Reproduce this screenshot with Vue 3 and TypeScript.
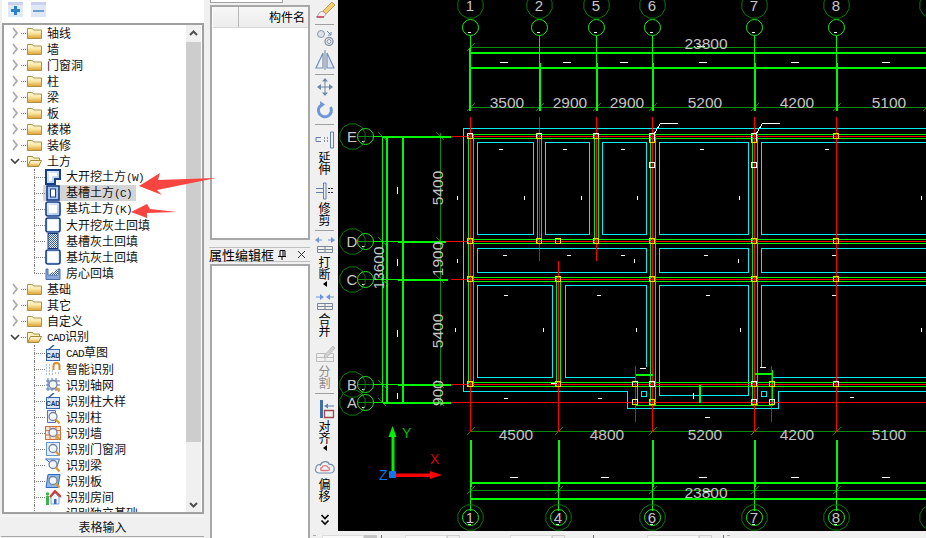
<script setup lang="ts">
type Seg = [number, number, number, number];

interface TreeRow {
  label: string;
  level: 0 | 1;
  kind: string;
  prefix?: string;
  suffix?: string;
  open?: boolean;
  last?: boolean;
  selected?: boolean;
}

interface Tool {
  icon: string;
  gap: number;
  label?: string[];
  menu?: boolean;
  muted?: boolean;
}

const folder = (label: string): TreeRow => ({ label, level: 0, kind: "folder" });
const leaf = (label: string, kind: string, suffix = ""): TreeRow => ({ label, suffix, level: 1, kind });

const treeRows: TreeRow[] = [
  folder("轴线"),
  folder("墙"),
  folder("门窗洞"),
  folder("柱"),
  folder("梁"),
  folder("板"),
  folder("楼梯"),
  folder("装修"),
  { label: "土方", level: 0, kind: "folder", open: true },
  leaf("大开挖土方", "dig", "(W)"),
  { ...leaf("基槽土方", "trench", "(C)"), selected: true },
  leaf("基坑土方", "pit", "(K)"),
  leaf("大开挖灰土回填", "fill"),
  leaf("基槽灰土回填", "fillNarrow"),
  leaf("基坑灰土回填", "fill"),
  { ...leaf("房心回填", "room"), last: true },
  folder("基础"),
  folder("其它"),
  folder("自定义"),
  { label: "识别", prefix: "CAD", level: 0, kind: "folder", open: true },
  { ...leaf("草图", "cad"), prefix: "CAD" },
  leaf("智能识别", "magnet"),
  leaf("识别轴网", "gridFind"),
  leaf("识别柱大样", "cad"),
  leaf("识别柱", "colFind"),
  leaf("识别墙", "wallFind"),
  leaf("识别门窗洞", "doorFind"),
  leaf("识别梁", "beamFind"),
  leaf("识别板", "slabFind"),
  leaf("识别房间", "house"),
  leaf("识别独立基础", "base"),
];

const tools: Tool[] = [
  { icon: "brush", gap: 0 },
  { icon: "sep", gap: 4 },
  { icon: "circles", gap: 3 },
  { icon: "mirror", gap: 2 },
  { icon: "sep", gap: 4 },
  { icon: "move", gap: 2 },
  { icon: "rotate", gap: 3 },
  { icon: "sep", gap: 4 },
  { icon: "extend", gap: 5, label: ["延", "伸"] },
  { icon: "trim", gap: 6, label: ["修", "剪"] },
  { icon: "sep", gap: 4 },
  { icon: "break", gap: 4, label: ["打", "断"], menu: true },
  { icon: "merge", gap: 5, label: ["合", "并"] },
  { icon: "split", gap: 7, label: ["分", "割"], muted: true },
  { icon: "sep", gap: 4 },
  { icon: "align", gap: 5, label: ["对", "齐"], menu: true },
  { icon: "cloud", gap: 6, label: ["偏", "移"] },
];

// 图纸坐标直接用页面坐标，viewBox 从 338 开始
const R = 926;
const yE = 136;
const yD = 241;
const yC = 279;
const yB = 384;
const yA = 402;
const topAxes = [470, 539, 596, 652, 754, 836];
const botAxes = [470, 558, 652, 754, 836];

const toPath = (segs: Seg[]) => segs.map((s) => `M${s[0]},${s[1]}L${s[2]},${s[3]}`).join("");

const ngon = (cx: number, cy: number, r: number, n = 12) =>
  Array.from({ length: n }, (_, i) => {
    const a = (Math.PI * 2 * i) / n + Math.PI / n;
    return `${(cx + r * Math.cos(a)).toFixed(1)},${(cy + r * Math.sin(a)).toFixed(1)}`;
  }).join(" ");

const redPath = toPath([
  [450, yE, R, yE],
  [445, yD, R, yD],
  [450, yC, R, yC],
  [450, yB, R, yB],
  [450, yA, R, yA],
  [470, 116, 470, 431],
  [539, 116, 539, 260],
  [596, 116, 596, 260],
  [558, 260, 558, 431],
  [652, 116, 652, 431],
  [754, 116, 754, 431],
  [836, 116, 836, 431],
  [635, 365, 635, 421],
  [771, 365, 771, 421],
]);

const greenPath = toPath([
  ...topAxes.map((x): Seg => [x, 35, x, 62]),
  ...botAxes.map((x): Seg => [x, 486, x, 510]),
  [926, 486, 926, 510],
  [468, 134, R, 134],
  [468, 138, R, 138],
  [468, 239, R, 239],
  [468, 243, R, 243],
  [468, 277, R, 277],
  [468, 281, R, 281],
  [468, 382, R, 382],
  [468, 386, R, 386],
  [635, 405, 772, 405],
  [468, 134, 468, 386],
  [473, 134, 473, 386],
  [537, 134, 537, 243],
  [541, 134, 541, 243],
  [594, 134, 594, 243],
  [598, 134, 598, 243],
  [556, 277, 556, 386],
  [560, 277, 560, 386],
  [650, 134, 650, 405],
  [655, 134, 655, 405],
  [752, 134, 752, 405],
  [757, 134, 757, 405],
  [635, 369, 635, 405],
  [637, 384, 637, 405],
  [772, 369, 772, 405],
  [382, yE, 382, yA],
  [373, yE, 382, yE],
  [373, yD, 397, yD],
  [373, yC, 397, yC],
  [373, yB, 397, yB],
  [373, yA, 382, yA],
  [689, yB, 703, yB],
  [689, yA, 703, yA],
]);

const thickPath = toPath([
  [470, 52, R, 52],
  [470, 67, R, 67],
  [470, 482, R, 482],
  [470, 498, R, 498],
  [469, 47, 469, 110],
  ...topAxes.slice(1).map((x): Seg => [x, 62, x, 110]),
  ...botAxes.map((x): Seg => [x, 439, x, 486]),
  [386, yE, 386, yA],
  [402, yE, 402, yA],
  [382, yE, 450, yE],
  [397, yD, 445, yD],
  [397, yC, 447, yC],
  [397, yB, 450, yB],
  [382, yA, 450, yA],
  [635, 374, 652, 374],
  [754, 373, 772, 373],
  [699, yB, 699, yA],
]);

const dimTicks: Seg[] = [];
[...topAxes, 926].forEach((x) => {
  dimTicks.push([x - 4, 111, x + 4, 103]);
});
dimTicks.push([466, 51, 474, 43]);
botAxes.forEach((x) => {
  dimTicks.push([x - 4, 435, x + 4, 427]);
  dimTicks.push([x - 4, 494, x + 4, 486]);
});
[yE, yD, yC, yB, yA].forEach((y) => {
  dimTicks.push([436, y - 4, 444, y + 4]);
  dimTicks.push([378, y - 4, 386, y + 4]);
});

const darkPath = toPath([
  [470, 47, R, 47],
  [470, 107, R, 107],
  [470, 431, R, 431],
  [470, 490, R, 490],
  [440, 132, 440, 405],
  [357, yE, 373, yE],
  [357, yD, 373, yD],
  [357, yC, 373, yC],
  [357, yB, 373, yB],
  [357, yA, 373, yA],
  ...dimTicks,
]);

const cyanPath = [
  `M${R},128H463V391H627V408H778V391H${R}`,
  "M477,142H533V234H477Z",
  "M545,142H589V234H545Z",
  "M602,142H646V234H602Z",
  "M659,142H748V234H659Z",
  `M${R},142H761V234H${R}`,
  "M477,248H646V272H477Z",
  "M659,248H748V272H659Z",
  `M${R},248H761V272H${R}`,
  "M477,285H552V377H477Z",
  "M635,377H565V285H646V366",
  "M659,285H748V395H659Z",
  `M${R},285H761V366M772,377H${R}`,
  "M641,391H646V396H641Z",
  "M761,391H766V396H761Z",
].join("");

const whitePath = toPath([
  ...[503, 566, 623, 702, 794, 885].map((x): Seg => [x - 4, 62, x + 4, 62]),
  ...[513, 604, 702, 794, 885].map((x): Seg => [x - 4, 477, x + 4, 477]),
  ...[500, 564, 622, 701, 826].map((x): Seg => [x - 2, 149, x + 2, 149]),
  ...[504, 568, 622, 705, 833].map((x): Seg => [x - 2, 255, x + 2, 255]),
  ...[505, 598, 707, 833].map((x): Seg => [x - 2, 295, x + 2, 295]),
  ...[505, 599].map((x): Seg => [x - 2, 398, x + 2, 398]),
  [704, 417, 709, 417],
  [849, 397, 853, 397],
  [639, 368, 645, 368],
  [759, 367, 765, 367],
  [550, 383, 556, 383],
  [696, 46, 704, 46],
  [702, 491, 710, 491],
  ...[457, 524, 581, 637, 739, 921].map((x): Seg => [x, 195, x, 199]),
  [397, 186, 397, 193],
  [397, 258, 397, 265],
  [457, 258, 457, 262],
  [634, 258, 634, 262],
  [738, 258, 738, 262],
  [397, 329, 397, 336],
  ...[455, 543, 636, 740, 921].map((x): Seg => [x, 327, x, 331]),
  [397, 392, 397, 398],
  [693, 392, 693, 398],
  [654, 133, 660, 123],
  [660, 123, 677, 123],
  [756, 133, 762, 123],
  [762, 123, 779, 123],
  ...topAxes.map((x): Seg => [x - 3, 32, x, 32]),
  ...botAxes.map((x): Seg => [x - 3, 524, x, 524]),
  ...[yE, yD, yC, yB, yA].map((y): Seg => [361, y + 5, 364, y + 5]),
]);

const marks: { x: number; y: number; h?: number; c: string }[] = [
  { x: 470, y: yE, c: "both" },
  { x: 539, y: yE, c: "both" },
  { x: 596, y: yE, c: "both" },
  { x: 652, y: 136, h: 9, c: "both" },
  { x: 754, y: 136, h: 9, c: "both" },
  { x: 836, y: yE, c: "y" },
  { x: 652, y: 165, c: "w" },
  { x: 754, y: 165, c: "w" },
  ...[470, 539, 558, 596, 652, 754, 836].map((x) => ({ x, y: yD, c: "y" })),
  ...[470, 558, 652, 754, 836].map((x) => ({ x, y: yC, c: "y" })),
  { x: 470, y: yB, c: "y" },
  { x: 558, y: yB, c: "y" },
  { x: 635, y: yB, c: "both" },
  { x: 652, y: yB, c: "w" },
  { x: 754, y: yB, c: "both" },
  { x: 772, y: yB, c: "y" },
  { x: 836, y: yB, c: "both" },
  { x: 635, y: yA, c: "both" },
  { x: 652, y: yA, c: "y" },
  { x: 754, y: yA, c: "both" },
  { x: 772, y: yA, c: "both" },
];

const outerBubbles = [
  ...topAxes.map((x, i) => ({ x, y: 5, t: ["1", "2", "5", "6", "7", "8"][i] })),
  { x: 932, y: 5, t: "" },
  ...botAxes.map((x, i) => ({ x, y: 517, t: ["1", "4", "6", "7", "8"][i] })),
  { x: 932, y: 517, t: "" },
  { x: 352, y: yE, t: "E" },
  { x: 352, y: yD, t: "D" },
  { x: 352, y: yC, t: "C" },
  { x: 352, y: yB, t: "B" },
  { x: 352, y: yA, t: "A" },
];

const innerBubbles = [
  ...topAxes.map((x) => ({ x, y: 27 })),
  ...botAxes.map((x) => ({ x, y: 517 })),
  ...[yE, yD, yC, yB, yA].map((y) => ({ x: 365, y })),
];

const dims = [
  { t: "23800", x: 706, y: 43 },
  { t: "3500", x: 507, y: 102 },
  { t: "2900", x: 570, y: 102 },
  { t: "2900", x: 627, y: 102 },
  { t: "5200", x: 705, y: 102 },
  { t: "4200", x: 797, y: 102 },
  { t: "5100", x: 889, y: 102 },
  { t: "4500", x: 516, y: 434 },
  { t: "4800", x: 607, y: 434 },
  { t: "5200", x: 705, y: 434 },
  { t: "4200", x: 797, y: 434 },
  { t: "5100", x: 889, y: 434 },
  { t: "23800", x: 706, y: 492 },
];

const sideDims = [
  { t: "5400", x: 437, y: 188 },
  { t: "1900", x: 437, y: 259 },
  { t: "5400", x: 437, y: 331 },
  { t: "900", x: 437, y: 393 },
  { t: "13600", x: 378, y: 268 },
];
</script>

<template>
  <div class="app">
    <!-- 公共渐变 -->
    <svg class="defs" width="0" height="0" aria-hidden="true">
      <defs>
        <linearGradient id="fold" x1="0" y1="0" x2="0" y2="1">
          <stop offset="0" stop-color="#fffbe8" />
          <stop offset="0.45" stop-color="#fbe7a8" />
          <stop offset="1" stop-color="#dfa02c" />
        </linearGradient>
        <linearGradient id="glow" x1="0" y1="0" x2="1" y2="1">
          <stop offset="0" stop-color="#e8f0fd" />
          <stop offset="1" stop-color="#a9c4ee" />
        </linearGradient>
        <pattern id="check" width="2" height="2" patternUnits="userSpaceOnUse">
          <rect width="2" height="2" fill="#e6eefb" />
          <rect width="1" height="1" fill="#3a5c94" />
          <rect x="1" y="1" width="1" height="1" fill="#3a5c94" />
        </pattern>
      </defs>
    </svg>

    <section class="left">
      <div class="left-top">
        <button type="button" class="mini"><span class="plus"></span></button>
        <button type="button" class="mini"><span class="minus"></span></button>
      </div>

      <div class="tree-box">
        <div class="tree">
          <div v-for="(row, i) in treeRows" :key="i" class="row">
            <template v-if="row.level === 0">
              <svg class="chev" width="12" height="16" viewBox="0 0 12 16">
                <path v-if="row.open" d="M2 6l4 4 4-4" fill="none" stroke="#404040" stroke-width="1.6" />
                <path v-else d="M4 3l4 5-4 5" fill="none" stroke="#a6a6a6" stroke-width="1.6" />
              </svg>
              <span class="dots"></span>
              <svg class="ico-folder" width="17" height="16" viewBox="0 0 17 16">
                <template v-if="row.open">
                  <path d="M1.5 13.5V3.5h5l1 1.5h6v2" fill="#fff3c4" stroke="#a98a3c" />
                  <path d="M1.5 13.5l3-6h11l-3 6z" fill="url(#fold)" stroke="#a98a3c" />
                </template>
                <path v-else d="M1.5 13.5V3.5h5l1 1.5h8v8.5z" fill="url(#fold)" stroke="#b09245" />
              </svg>
              <span class="label"><span v-if="row.prefix" class="latin">{{ row.prefix }}</span>{{ row.label }}</span>
            </template>

            <template v-else>
              <span class="guide" :class="{ last: row.last }"></span>
              <span class="leaf" :class="{ selected: row.selected }">
                <svg class="ico" width="16" height="16" viewBox="0 0 16 16">
                  <template v-if="row.kind === 'dig'">
                    <path d="M1 1h14v9h-5v5H1z" fill="url(#glow)" stroke="#143f88" stroke-width="2" />
                    <path d="M4 4h8v3H7v5H4z" fill="#fff" />
                  </template>
                  <template v-else-if="row.kind === 'trench'">
                    <rect x="2" y="1" width="12" height="14" fill="#a9c4ee" stroke="#143f88" stroke-width="1.6" />
                    <rect x="5.5" y="4" width="5" height="8" fill="#fff" stroke="#143f88" />
                  </template>
                  <template v-else-if="row.kind === 'pit'">
                    <rect x="1" y="1" width="14" height="14" rx="2" fill="url(#glow)" stroke="#143f88" stroke-width="1.6" />
                    <rect x="4" y="4" width="8" height="8" fill="#fff" />
                  </template>
                  <template v-else-if="row.kind === 'fill'">
                    <rect x="1" y="1" width="14" height="14" rx="2" fill="#dfe9fa" stroke="#143f88" stroke-width="1.6" />
                    <rect x="3" y="3" width="10" height="10" fill="#fff" />
                  </template>
                  <template v-else-if="row.kind === 'fillNarrow'">
                    <rect x="3" y="0.5" width="10" height="15" fill="url(#check)" stroke="#143f88" />
                  </template>
                  <template v-else-if="row.kind === 'room'">
                    <path d="M1 4v10.5h14V4h-2v6H3V4z" fill="#8ba7d8" stroke="#4a6ca8" />
                    <path d="M4 10l3-3 2 1 2-4 2 1v5z" fill="url(#check)" />
                  </template>
                  <template v-else-if="row.kind === 'cad'">
                    <rect x="1.5" y="4.5" width="13" height="11" fill="#dbe7f8" stroke="#3a68ae" />
                    <text x="8" y="13" class="tiny">CAD</text>
                    <path d="M3 5l6-5" stroke="#2f5ea8" stroke-width="1.5" />
                  </template>
                  <template v-else-if="row.kind === 'magnet'">
                    <path d="M1 4h1M4 4h1M1 7h1M4 7h1M7 10h1M1 10h1M4 10h1M10 12h1M13 12h1M1 13h1M4 13h1M7 13h1" stroke="#4a86d8" />
                    <path d="M8.5 9V5a3 3 0 0 1 6 0v4" fill="none" stroke="#e08a2c" stroke-width="2" />
                  </template>
                  <template v-else-if="row.kind === 'house'">
                    <rect x="1" y="7" width="3" height="9" fill="#3fb34a" />
                    <circle cx="2.5" cy="5" r="1.8" fill="#3fb34a" />
                    <path d="M6 8v7h8V8l-4-4z" fill="#f4f8ff" stroke="#7aa0d8" />
                    <path d="M5 8l5-6 6 6" fill="none" stroke="#d8342c" stroke-width="2" />
                    <rect x="9" y="10" width="2.5" height="5" fill="#3a68ae" />
                  </template>
                  <template v-else-if="row.kind === 'base'">
                    <path d="M2 10l3-3 2 1v6H2zM9 8h5v6H9z" fill="#7e9cc8" stroke="#3a5c94" />
                  </template>
                  <template v-else>
                    <path v-if="row.kind === 'gridFind'" d="M3 1v13M7 1v13M11 1v13M1 4h14M1 8h14M1 12h14" stroke="#4a72b8" fill="none" />
                    <path v-if="row.kind === 'colFind'" d="M2.5 1.5h8v12h-8z" fill="#e8eefb" stroke="#5a70b0" />
                    <g v-if="row.kind === 'wallFind'">
                      <rect x="0.5" y="1.5" width="15" height="13" fill="#fbe4d4" stroke="#d0703a" />
                      <path d="M1 5.5h14M1 10h14M5 1.5v13M11 1.5v13" stroke="#d0703a" />
                    </g>
                    <g v-if="row.kind === 'doorFind'">
                      <rect x="1.5" y="1.5" width="13" height="13" fill="#e4eefc" stroke="#5f92d8" />
                    </g>
                    <path v-if="row.kind === 'beamFind'" d="M0.5 2h14l-3 9z" fill="#dce8fa" stroke="#2f6cc0" />
                    <path v-if="row.kind === 'slabFind'" d="M3 1.5h12l-2 13H1z" fill="#8fb6ea" stroke="#2f6cc0" />
                    <circle cx="8" cy="7.5" r="4" fill="#f2f6fd" stroke="#77839a" stroke-width="1.3" />
                    <path d="M11 10.5l3.5 4" stroke="#dc9a30" stroke-width="2.2" />
                  </template>
                </svg>
                <span class="label"><span v-if="row.prefix" class="latin">{{ row.prefix }}</span>{{ row.label }}<span v-if="row.suffix" class="latin">{{ row.suffix }}</span></span>
              </span>
            </template>
          </div>
        </div>

        <div class="scrollbar">
          <div class="scroll-btn">
            <svg width="15" height="17" viewBox="0 0 15 17"><path d="M4 10l3.5-3.5L11 10" fill="none" stroke="#505050" stroke-width="2" /></svg>
          </div>
          <div class="thumb"></div>
          <div class="track"></div>
          <div class="scroll-btn">
            <svg width="15" height="17" viewBox="0 0 15 17"><path d="M4 8l3.5 3.5L11 8" fill="none" stroke="#505050" stroke-width="2" /></svg>
          </div>
        </div>
      </div>

      <button type="button" class="table-input">表格输入</button>

      <!-- 截图上的红色标注箭头 -->
      <svg class="callouts" width="220" height="60" viewBox="0 0 220 60">
        <path d="M139 16L160 3L158 10L216 8L157 20L162 25z" fill="#f8453f" />
        <path d="M131 42L147 34L150 39L177 42L147 43L147 48z" fill="#f8453f" />
      </svg>
    </section>

    <section class="middle">
      <div class="mid-stub"><div class="mid-stub-tab"></div></div>
      <div class="grid-box">
        <div class="grid-head">
          <div class="grid-cell-a"></div>
          <div class="grid-cell-b">构件名</div>
        </div>
      </div>
      <div class="prop-title">
        <span class="prop-text">属性编辑框</span>
        <svg width="10" height="12" viewBox="0 0 10 12"><path d="M3 1.5h5v6H3zM6 1.5v6M1 7.5h8M5 7.5V11" fill="none" stroke="#000" /></svg>
        <svg class="prop-close" width="9" height="9" viewBox="0 0 9 9"><path d="M1 1l7 7M8 1L1 8" stroke="#333" /></svg>
      </div>
      <div class="prop-box"></div>
    </section>

    <section class="right">
      <div class="work">
        <aside class="toolbar">
          <div v-for="(tool, i) in tools" :key="i" class="tool" :class="{ muted: tool.muted }" :style="{ marginTop: tool.gap + 'px' }">
            <div v-if="tool.icon === 'sep'" class="tool-sep"></div>
            <svg v-else width="22" height="20" viewBox="0 0 22 20">
              <g v-if="tool.icon === 'brush'">
                <path d="M9 11L18 2l3 3-9 9z" fill="#f2cf70" stroke="#b48c3c" stroke-width="0.8" />
                <path d="M5 13c2-2 4-2 6 0s-1 4-3 4H2c2-1 2-2 3-4z" fill="#f4eef0" stroke="#9a8ea0" stroke-width="0.8" />
                <path d="M3 17h7" stroke="#d03a5a" stroke-width="1.5" />
              </g>
              <g v-else-if="tool.icon === 'circles'" fill="none" stroke="#8a96a6">
                <circle cx="7" cy="6" r="3.5" fill="#dde2ea" />
                <circle cx="15" cy="13.5" r="4" stroke-width="1.4" />
                <circle cx="15" cy="13.5" r="2" />
                <path d="M13 3l4 4M17 4v3h-3" stroke="#6d8ab8" />
              </g>
              <g v-else-if="tool.icon === 'mirror'" fill="none" stroke="#7590b8" stroke-width="1.2">
                <path d="M9 3v15H2z" />
                <path d="M13 3v15h7z" fill="#dfe8f5" />
                <path d="M11 0v20" stroke="#8a96a6" />
              </g>
              <g v-else-if="tool.icon === 'move'" fill="#6f87a8">
                <path d="M4 9.5h14v1H4zM10.5 3h1v14h-1z" />
                <path d="M11 1l3 3.500H8zM11 19l3-3.500H8zM3 10l4-3v6zM19 10l-4-3v6z" />
              </g>
              <g v-else-if="tool.icon === 'rotate'">
                <path d="M8 4.5A6.500 6.500 0 1 0 16.500 7" fill="none" stroke="#6f96dc" stroke-width="3" />
                <path d="M6 1l5 3.5L6.5 8z" fill="#6f96dc" />
              </g>
              <g v-else-if="tool.icon === 'extend'" fill="none" stroke="#5f7fb4">
                <path d="M7 7.500H2v4h5" />
                <path d="M10 8h1M10 11h1M13 8h1M13 11h1" stroke="#333" />
                <path d="M16.500 2h3v16h-3z" />
              </g>
              <g v-else-if="tool.icon === 'trim'" fill="none" stroke="#5f7fb4">
                <path d="M2 7.500h8M2 11.500h8" />
                <path d="M9.500 2H12v16H9.500z" />
                <path d="M14 7.500h6M14 11.500h6" stroke="#333" stroke-dasharray="2 1" />
              </g>
              <g v-else-if="tool.icon === 'break'">
                <path d="M2 5h6M14 5h6" stroke="#6f96dc" />
                <path d="M1 5l4-3v6zM21 5l-4-3v6z" fill="#6f96dc" />
                <path d="M3.500 11.500h15v6h-15zM11 11.500v6M3.500 14.500h15" fill="none" stroke="#7a8798" />
              </g>
              <g v-else-if="tool.icon === 'merge'">
                <path d="M2 5h6M14 5h6" stroke="#6f96dc" />
                <path d="M10 5L6 2v6zM12 5l4-3v6z" fill="#6f96dc" />
                <path d="M3.500 11.500h15v6h-15zM11 11.500v6M3.500 14.500h15" fill="none" stroke="#7a8798" />
              </g>
              <g v-else-if="tool.icon === 'split'" fill="none" stroke="#bdbdbd">
                <path d="M2.500 9.500h17v8h-17zM2.500 13.500h17M11 9.500v8" />
                <path d="M10 12l9-10 2 2-9 10z" fill="#d2d2d2" />
              </g>
              <g v-else-if="tool.icon === 'align'">
                <rect x="6" y="1" width="3" height="18" fill="#3e6ea8" />
                <path d="M10.500 11.500h9v7h-9z" fill="none" stroke="#a04a50" stroke-width="1.3" />
                <path d="M12 7h8" stroke="#5f7fb4" />
                <path d="M10 7l4-2.500v5z" fill="#5f7fb4" />
              </g>
              <g v-else-if="tool.icon === 'cloud'" fill="none">
                <path d="M5 16c-3 0-4.500-3-3-5 0-3 3-4 4.500-3C7.500 4 14 3 15.500 7.500c3-.5 5 2 4.500 4 1 2-1 4.500-3.500 4.500z" stroke="#6f8ca8" stroke-width="1.2" fill="#f3f5f8" />
                <path d="M8 13.500c-2 0-2-2.500 0-3 .5-2.500 5-2.500 6 0 2 0 2 3 0 3z" stroke="#e07a78" stroke-width="1.3" />
              </g>
            </svg>
            <div v-if="tool.label" class="tool-label">
              <span v-for="ch in tool.label" :key="ch">{{ ch }}</span>
            </div>
            <svg v-if="tool.menu" class="tool-menu" width="6" height="6" viewBox="0 0 6 6"><path d="M5 0v6L1 3z" fill="#000" /></svg>
          </div>
          <svg class="tool-more" width="10" height="12" viewBox="0 0 10 12">
            <path d="M1.5 1L5 4.500 8.500 1M1.500 6.500L5 10l3.500-3.500" fill="none" stroke="#000" stroke-width="1.6" />
          </svg>
        </aside>

        <div class="canvas">
          <svg class="drawing" viewBox="338 0 588 531" width="588" height="531">
            <g transform="translate(0.5 0.5)" fill="none">
              <g shape-rendering="crispEdges">
                <path :d="darkPath" stroke="#0a8a0a" />
                <path :d="cyanPath" stroke="#00f0f8" />
                <path :d="greenPath" stroke="#00f000" />
                <path :d="redPath" stroke="#ff0000" />
                <path :d="thickPath" stroke="#00f800" stroke-width="2" />
                <path :d="whitePath" stroke="#ffffff" />
                <template v-for="(m, i) in marks" :key="i">
                  <rect :x="m.x - 3" :y="m.y - 3" width="5" :height="m.h ?? 5" :stroke="m.c === 'w' ? '#ffffff' : '#f0e000'" />
                  <path v-if="m.c === 'both'" :d="`M${m.x - 3},${m.y - 3}h5v${(m.h ?? 5) - 2}M${m.x - 3},${m.y - 3}v${(m.h ?? 5) - 2}`" stroke="#ffffff" />
                </template>
              </g>
              <polygon v-for="(b, i) in outerBubbles" :key="'o' + i" :points="ngon(b.x, b.y, 13)" stroke="#0a7a0a" />
              <circle v-for="(b, i) in innerBubbles" :key="'c' + i" :cx="b.x" :cy="b.y" r="8" stroke="#22e822" />
            </g>

            <text v-for="(b, i) in outerBubbles" :key="'t' + i" :x="b.x" :y="b.y + 6" class="bubble-text">{{ b.t }}</text>
            <text v-for="(d, i) in dims" :key="'d' + i" :x="d.x" :y="d.y + 6" class="dim-text">{{ d.t }}</text>
            <text
              v-for="(d, i) in sideDims"
              :key="'s' + i"
              class="dim-text"
              :transform="`translate(${d.x + 6} ${d.y}) rotate(-90)`"
            >{{ d.t }}</text>

            <!-- UCS 坐标系图标 -->
            <path d="M391.5 474V436h3v38z" fill="#00f000" />
            <path d="M388.5 437l4-11 4 11z" fill="#00f000" />
            <path d="M393 473.5h38v3.500h-38z" fill="#ff0000" />
            <path d="M430 471l12 4-12 4z" fill="#ff0000" />
            <rect x="389" y="471" width="7" height="7" rx="1" fill="#0a78f0" />
            <text x="402" y="438" class="ucs ucs-y">Y</text>
            <text x="430" y="464" class="ucs ucs-x">X</text>
            <text x="379" y="480" class="ucs ucs-z">Z</text>
          </svg>
        </div>
      </div>

      <footer class="status">
        <span class="grip"></span>
        <span class="field f1"></span>
        <span class="field-thumb"></span>
        <span class="status-sep s1"></span>
        <span class="field f2"></span>
        <span class="field-btn"></span>
        <span class="field f3"></span>
        <span class="field-btn"></span>
        <span class="status-sep s2"></span>
        <span class="field f4"></span>
        <span class="field-btn"></span>
        <span class="status-sep s3"></span>
        <span class="grip"></span>
      </footer>
    </section>
  </div>
</template>

<style>
html,
body {
  margin: 0;
  background: #f0f0f0;
}
</style>

<style scoped>
.app {
  position: relative;
  display: flex;
  width: 926px;
  height: 538px;
  overflow: hidden;
  background: #f0f0f0;
  font-family: "Noto Sans CJK SC", "Liberation Sans", sans-serif;
  font-size: 12px;
  color: #000;
}

.defs {
  position: absolute;
}

.left {
  position: relative;
  display: flex;
  flex-direction: column;
  flex: none;
  width: 204px;
  margin-right: 4px;
}

.left-top {
  display: flex;
  gap: 8px;
  height: 23px;
  margin-left: 2px;
  padding: 2px 0 0 6px;
  box-sizing: border-box;
  background: #fff;
}

.mini {
  display: flex;
  align-items: center;
  justify-content: center;
  width: 15px;
  height: 15px;
  padding: 2px 0 0;
  border: 0;
  background: linear-gradient(#c9d1ef 0 3px, #dfe8f6 3px);
}

.plus,
.minus {
  position: relative;
  display: block;
  width: 9px;
  height: 3px;
  background: #2c82c9;
}

.minus {
  background: #6b9fd0;
  width: 11px;
  height: 2px;
}

.plus::after {
  content: "";
  position: absolute;
  left: 3px;
  top: -3px;
  width: 3px;
  height: 9px;
  background: #2c82c9;
}

.tree-box {
  display: flex;
  height: 491px;
  margin-left: 2px;
  border: 2px solid #a0a0a0;
  box-sizing: border-box;
  background: #fff;
}

.tree {
  flex: 1;
  min-width: 0;
  overflow: hidden;
}

.row {
  display: flex;
  align-items: center;
  height: 16px;
  white-space: nowrap;
}

.chev {
  flex: none;
  margin-left: 5px;
}

.dots {
  flex: none;
  width: 5px;
  height: 0;
  border-top: 1px dotted #808080;
}

.ico-folder {
  flex: none;
  margin-right: 4px;
}

.label {
  font-size: 12px;
  line-height: 16px;
  color: #111;
}

.latin {
  font-family: "Liberation Mono", monospace;
  font-size: 11px;
  letter-spacing: -0.6px;
}

.guide {
  position: relative;
  flex: none;
  width: 11px;
  height: 16px;
  margin-left: 30px;
}

.guide::before {
  content: "";
  position: absolute;
  left: 0;
  top: 0;
  bottom: 0;
  border-left: 1px dotted #808080;
}

.guide.last::before {
  bottom: 8px;
}

.guide::after {
  content: "";
  position: absolute;
  left: 0;
  right: 0;
  top: 8px;
  border-top: 1px dotted #808080;
}

.leaf {
  display: flex;
  align-items: center;
  height: 16px;
  margin-left: -2px;
  padding: 0 4px 0 2px;
}

.leaf.selected {
  background: #d4d4d4;
}

.ico {
  flex: none;
  margin-right: 5px;
}

.tiny {
  font-family: "Liberation Sans", sans-serif;
  font-size: 6.5px;
  font-weight: 700;
  text-anchor: middle;
  fill: #1a2c50;
}

.scrollbar {
  display: flex;
  flex-direction: column;
  flex: none;
  width: 15px;
  margin-right: 1px;
  background: #f0f0f0;
}

.scroll-btn {
  flex: none;
  height: 17px;
}

.thumb {
  flex: none;
  height: 400px;
  background: #cdcdcd;
}

.track {
  flex: 1;
}

.table-input {
  flex: none;
  width: 203px;
  height: 21px;
  margin: 2px 0 0 1px;
  padding: 0;
  border: 0;
  border-top: 1px solid #f8f8f8;
  border-bottom: 1px solid #a8a8a8;
  background: #f0f0f0;
  font: inherit;
  font-size: 12px;
  color: #111;
}

.callouts {
  position: absolute;
  left: 0;
  top: 170px;
  overflow: visible;
}

.middle {
  display: flex;
  flex-direction: column;
  flex: none;
  width: 103px;
}

.mid-stub {
  height: 5px;
  margin: 0 4px 0 2px;
  box-sizing: border-box;
}

.mid-stub-tab {
  width: 73px;
  height: 3px;
  box-sizing: border-box;
  background: #fff;
  border: 1px solid #a0a0a0;
  border-top: 0;
}

.grid-box {
  height: 235px;
  margin: 0 1px 0 2px;
  border: 2px solid #a8a8a8;
  box-sizing: border-box;
  background: #fff;
}

.grid-head {
  display: flex;
  height: 21px;
  margin-left: 1px;
  border-bottom: 1px solid #d8d8d8;
  box-sizing: border-box;
  background: linear-gradient(#f7f7f7, #ececec);
  line-height: 20px;
}

.grid-cell-a {
  flex: none;
  width: 25px;
  border-right: 1px solid #b8b8b8;
}

.grid-cell-b {
  flex: 1;
  padding-right: 3px;
  overflow: hidden;
  text-align: right;
  white-space: nowrap;
}

.prop-title {
  display: flex;
  align-items: center;
  height: 15px;
  margin: 7px 1px 0 1px;
  border-top: 1px solid #c0c0c0;
  border-bottom: 1px solid #c0c0c0;
  box-sizing: border-box;
  background: #f0f0f0;
}

.prop-text {
  font-size: 13px;
  line-height: 13px;
  margin-right: 3px;
}

.prop-close {
  margin-left: 10px;
}

.prop-box {
  flex: 1;
  margin: 2px 1px 0 2px;
  border: 2px solid #a8a8a8;
  border-bottom: 0;
  background: #fff;
}

.right {
  display: flex;
  flex-direction: column;
  flex: 1;
  min-width: 0;
}

.work {
  display: flex;
  flex: none;
  height: 531px;
}

.toolbar {
  display: flex;
  flex-direction: column;
  align-items: center;
  flex: none;
  width: 27px;
  background: #f0f0f0;
}

.tool {
  display: flex;
  flex-direction: column;
  align-items: center;
  flex: none;
}

.tool > svg {
  display: block;
}

.tool-sep {
  width: 19px;
  height: 1px;
  background: #a0a0a0;
}

.tool-label {
  display: flex;
  flex-direction: column;
  margin-top: 1px;
  font-size: 12px;
  line-height: 12px;
}

.tool.muted .tool-label {
  color: #8c8c8c;
}

.tool .tool-menu {
  margin-top: 1px;
}

.tool-more {
  flex: none;
  margin-top: 12px;
}

.canvas {
  flex: 1;
  min-width: 0;
  background: #000;
}

.drawing {
  display: block;
}

.dim-text {
  font-family: "Liberation Sans", sans-serif;
  font-size: 15.5px;
  text-anchor: middle;
  fill: #c4c4c4;
}

.bubble-text {
  font-family: "Liberation Sans", sans-serif;
  font-size: 15px;
  text-anchor: middle;
  fill: #c8c8c8;
}

.ucs {
  font-family: "Liberation Sans", sans-serif;
  font-size: 14px;
}

.ucs-y {
  fill: #00c000;
}

.ucs-x {
  fill: #d00000;
}

.ucs-z {
  fill: #0a78f0;
}

.status {
  display: flex;
  align-items: flex-start;
  flex: 1;
  padding-top: 4px;
  box-sizing: border-box;
  background: #f0f0f0;
}

.grip {
  flex: none;
  width: 3px;
  height: 4px;
  margin: 0 3px 0 2px;
  background: repeating-linear-gradient(#a8a8a8 0 1px, transparent 1px 3px);
}

.field {
  flex: none;
  height: 4px;
  border: 1px solid #dcdcdc;
  border-bottom: 0;
  box-sizing: border-box;
  background: #fafafa;
}

.f1 {
  width: 42px;
  margin-left: 3px;
}

.field-thumb {
  flex: none;
  width: 13px;
  height: 4px;
  background: #c4c4c4;
}

.status-sep {
  flex: none;
  width: 1px;
  height: 4px;
  background: #707070;
}

.s1 {
  margin-left: 4px;
}

.f2 {
  width: 42px;
  margin-left: 23px;
}

.field-btn {
  flex: none;
  width: 13px;
  height: 4px;
  border: 1px solid #cfcfcf;
  border-bottom: 0;
  box-sizing: border-box;
}

.f3 {
  width: 42px;
  margin-left: 50px;
}

.s2 {
  margin-left: 28px;
}

.f4 {
  width: 52px;
  margin-left: 53px;
}

.s3 {
  margin-left: 11px;
  margin-right: 1px;
}
</style>
